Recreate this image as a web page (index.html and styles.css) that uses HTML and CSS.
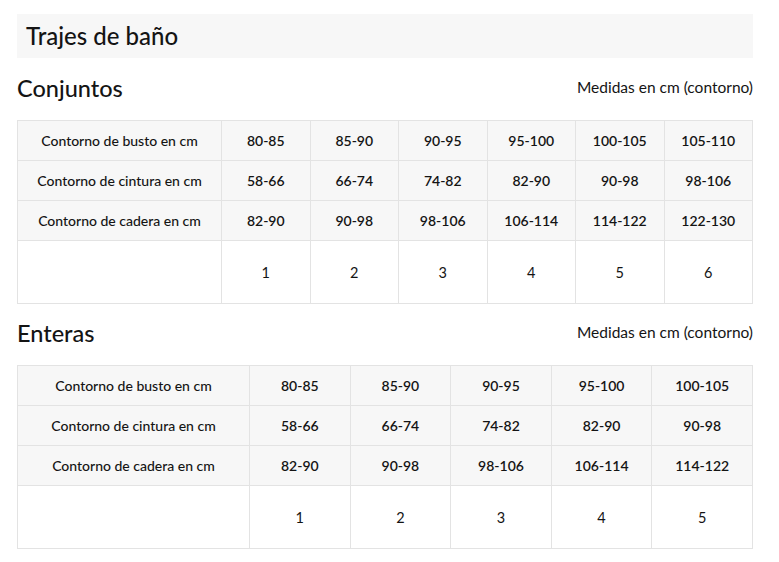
FILE: index.html
```html
<!DOCTYPE html>
<html lang="es">
<head>
<meta charset="utf-8">
<title>Trajes de baño</title>
<link rel="stylesheet" href="styles.css">
</head>
<body>
<div class="page">
  <div class="title-bar"><h1 class="title">Trajes de baño</h1></div>

  <section class="section">
    <div class="section-head">
      <h2 class="section-title">Conjuntos</h2>
      <span class="note">Medidas en cm (contorno)</span>
    </div>
    <table class="sizes sizes-6">
      <colgroup><col class="c-label"><col><col><col><col><col><col></colgroup>
      <tbody>
        <tr class="hd"><td class="label">Contorno de busto en cm</td><td>80-85</td><td>85-90</td><td>90-95</td><td>95-100</td><td>100-105</td><td>105-110</td></tr>
        <tr class="hd"><td class="label">Contorno de cintura en cm</td><td>58-66</td><td>66-74</td><td>74-82</td><td>82-90</td><td>90-98</td><td>98-106</td></tr>
        <tr class="hd"><td class="label">Contorno de cadera en cm</td><td>82-90</td><td>90-98</td><td>98-106</td><td>106-114</td><td>114-122</td><td>122-130</td></tr>
        <tr class="sz"><td></td><td>1</td><td>2</td><td>3</td><td>4</td><td>5</td><td>6</td></tr>
      </tbody>
    </table>
  </section>

  <section class="section section-next">
    <div class="section-head">
      <h2 class="section-title">Enteras</h2>
      <span class="note">Medidas en cm (contorno)</span>
    </div>
    <table class="sizes sizes-5">
      <colgroup><col class="c-label"><col><col><col><col><col></colgroup>
      <tbody>
        <tr class="hd"><td class="label">Contorno de busto en cm</td><td>80-85</td><td>85-90</td><td>90-95</td><td>95-100</td><td>100-105</td></tr>
        <tr class="hd"><td class="label">Contorno de cintura en cm</td><td>58-66</td><td>66-74</td><td>74-82</td><td>82-90</td><td>90-98</td></tr>
        <tr class="hd"><td class="label">Contorno de cadera en cm</td><td>82-90</td><td>90-98</td><td>98-106</td><td>106-114</td><td>114-122</td></tr>
        <tr class="sz"><td></td><td>1</td><td>2</td><td>3</td><td>4</td><td>5</td></tr>
      </tbody>
    </table>
  </section>
</div>
</body>
</html>
```

FILE: styles.css
```css
html, body {
  margin: 0;
  padding: 0;
  background: #ffffff;
}
body {
  font-family: "Lato", "Open Sans", sans-serif;
  color: #141414;
}
.page {
  width: 736px;
  padding: 14px 0 0 17px;
}
.title-bar {
  background: #f7f7f7;
  height: 44px;
  display: flex;
  align-items: center;
  padding-left: 9px;
}
.title {
  margin: 0;
  font-size: 24px;
  font-weight: 500;
  padding-bottom: 1px;
}
.section-head {
  height: 62px;
  display: flex;
  align-items: center;
  justify-content: space-between;
}
.section-next .section-head {
  height: 61px;
}
.section-title {
  margin: 0;
  font-size: 23.5px;
  font-weight: 500;
  padding-bottom: 3px;
}
.note {
  font-size: 15.5px;
  font-weight: 400;
  padding-bottom: 5px;
}
.sizes {
  width: 736px;
  border-collapse: collapse;
  table-layout: fixed;
}
.sizes-6 .c-label { width: 204px; }
.sizes-5 .c-label { width: 232px; }
.sizes td {
  border: 1px solid #e3e3e3;
  text-align: center;
  padding: 0;
  font-size: 14px;
}
.sizes tr.hd td {
  height: 39px;
  background: #f7f7f7;
  font-weight: 600;
}
.sizes tr.hd td.label {
  font-size: 14px;
  font-weight: 500;
}
.sizes tr.sz td {
  height: 62px;
  background: #ffffff;
  font-weight: 400;
  font-size: 14.5px;
}
```
